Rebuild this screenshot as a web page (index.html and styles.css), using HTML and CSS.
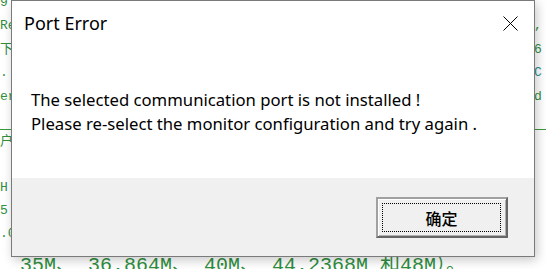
FILE: index.html
```html
<!DOCTYPE html>
<html>
<head>
<meta charset="utf-8">
<link rel="stylesheet" href="styles.css">
</head>
<body>
<div class="editor">
  <div class="row r0"><span>9</span><span></span></div>
  <div class="row"><span>Re</span><span class="rt">,</span></div>
  <div class="row"><span>下</span><span class="rt">6</span></div>
  <div class="row"><span>. I</span><span class="rt teal">C</span></div>
  <div class="row"><span>er</span><span class="rt">d</span></div>
  <div class="row"><span></span><span></span></div>
  <div class="row rule"><span>户</span><span></span></div>
  <div class="row"><span></span><span></span></div>
  <div class="row tight"><span>H</span><span></span></div>
  <div class="row tight"><span>5</span><span></span></div>
  <div class="row tight"><span>.0</span><span></span></div>
  <div class="big">35M、 36.864M、 40M、 44.2368M 和48M）。</div>
</div>

<div class="dialog">
  <div class="titlebar">
    <span class="title">Port Error</span>
    <svg class="close" width="15" height="15" viewBox="0 0 15 15">
      <path d="M0.5 0.5 L14.5 14.5 M14.5 0.5 L0.5 14.5" stroke="#000" stroke-width="1" fill="none"/>
    </svg>
  </div>
  <div class="body">
    <p class="msg">The selected communication port is not installed !<br>Please re-select the monitor configuration and try again .</p>
  </div>
  <div class="footer">
    <div class="btn"><div class="focus">确定</div></div>
  </div>
</div>
</body>
</html>
```

FILE: styles.css
```css
html, body {
  margin: 0;
  padding: 0;
  width: 546px;
  height: 269px;
  overflow: hidden;
  background: #ffffff;
}

.editor {
  font-family: "Liberation Mono", "Noto Sans CJK SC", monospace;
  font-size: 13px;
  color: #2f8f3f;
  margin-top: -9px;
}

.row {
  display: flex;
  justify-content: space-between;
  height: 23.4px;
  line-height: 23.4px;
  padding-right: 4px;
}

.row.rule {
  border-top: 1px solid #3c9a3c;
  height: 22.4px;
  margin-top: -2px;
}

.row.tight {
  height: 23px;
  line-height: 23px;
}

.rt { width: 8px; }
.teal { color: #2a8f8a; }

.big {
  font-size: 20px;
  line-height: 23px;
  padding-left: 20px;
  margin-top: 9px;
  white-space: nowrap;
  color: #2f8f3f;
}

.dialog {
  position: absolute;
  left: 11px;
  top: 0;
  width: 522px;
  height: 255px;
  border: 1px solid #7a7a7a;
  background: #ffffff;
  box-shadow: 2px 3px 10px rgba(0, 0, 0, 0.22);
  display: flex;
  flex-direction: column;
  font-family: "Noto Sans", "Segoe UI", sans-serif;
}

.titlebar {
  height: 44px;
  display: flex;
  align-items: flex-start;
  justify-content: space-between;
  padding: 0 16px 0 12px;
}

.title {
  font-size: 18px;
  line-height: 22px;
  margin-top: 11px;
  color: #000;
}

.close {
  margin-top: 15px;
}

.body {
  flex: 1;
  padding: 0 0 0 19px;
}

.msg {
  margin: 43px 0 0 0;
  font-size: 16.7px;
  line-height: 24px;
  color: #000;
  white-space: nowrap;
}

.footer {
  height: 78px;
  background: #f0f0f0;
  display: flex;
  justify-content: flex-end;
  align-items: flex-start;
  padding-right: 26px;
}

.btn {
  box-sizing: border-box;
  margin-top: 19px;
  width: 132px;
  height: 41px;
  padding: 4px 5px 4px 4px;
  background: #f0f0f0;
  border: 2px solid;
  border-color: #a0a0a0 #666666 #666666 #a0a0a0;
  box-shadow: inset 1px 1px 0 #ffffff, inset -1px -1px 0 #b0b0b0;
  display: flex;
}

.focus {
  flex: 1;
  border: 1px dotted #000000;
  display: flex;
  align-items: center;
  justify-content: center;
  font-family: "Noto Sans CJK SC", sans-serif;
  font-size: 16px;
  font-weight: 500;
  color: #000;
}
```
